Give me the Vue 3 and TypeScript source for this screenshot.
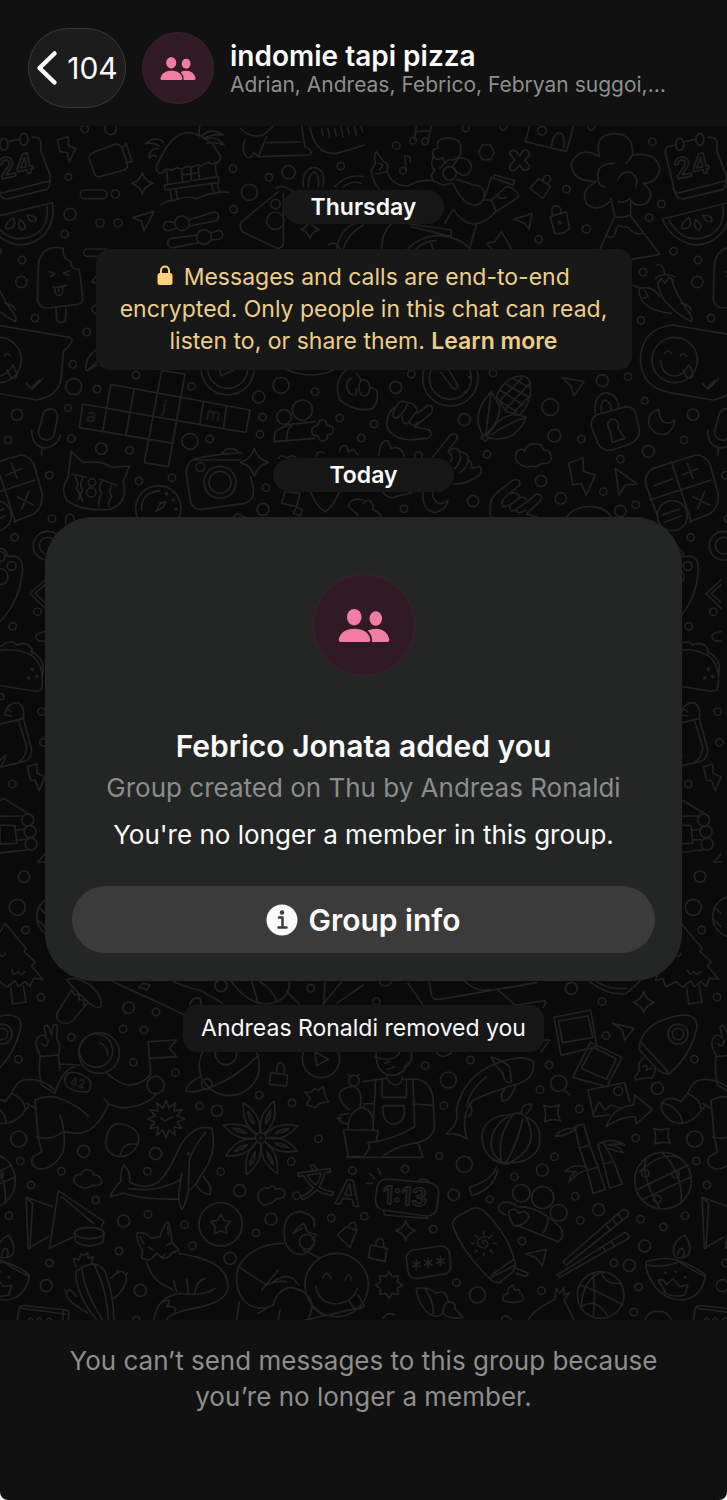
<script setup lang="ts">
type Dot = [x: number, y: number, r: number]
type Label = { text: string; x: number; y: number; size: number; angle: number; weight: number; thin?: boolean; wraps?: boolean }
type Tile = { x: number; y: number; dots: Dot[]; sparkles: Dot[]; paths: string[]; labels: Label[] }

const TILE_WIDTH = 2028
const repeats = [0, -TILE_WIDTH, TILE_WIDTH]

function sparkle([x, y, r]: Dot): string {
  const k = r * 0.22
  return `M${x} ${y - r}Q${x + k} ${y - k} ${x + r} ${y}Q${x + k} ${y + k} ${x} ${y + r}Q${x - k} ${y + k} ${x - r} ${y}Q${x - k} ${y - k} ${x} ${y - r}Z`
}

function star(x: number, y: number, points: number, outer: number, inner: number): string {
  const steps = Array.from({ length: points * 2 }, (_, i) => {
    const r = i % 2 === 0 ? outer : inner
    const a = (Math.PI * i) / points - Math.PI / 2
    return `${Math.round(x + r * Math.cos(a))} ${Math.round(y + r * Math.sin(a))}`
  })
  return `M${steps.join('L')}Z`
}

function asterisk(x: number, y: number): string {
  return `M${x} ${y - 13}v26M${x - 11} ${y - 7}l22 14M${x + 11} ${y - 7}l-22 14`
}

// Labels cut by the edge are repeated with the tile, the others are drawn once.
function labelsFor(tile: Tile, shift: number): Label[] {
  return tile.labels.filter((label) => shift === 0 || (label.wraps && shift < 0))
}

const petals = [20, 72, 109, 155, 201, 243, 289, 334]

const tiles: Tile[] = [
  {
    x: 0,
    y: 360,
    dots: [
      [254, 27, 11], [332, 27, 17], [205, 171, 10], [346, 222, 12], [210, 283, 18], [300, 309, 12], [354, 309, 12],
      [194, 342, 11], [66, 420, 11], [64, 486, 17], [105, 594, 11], [260, 636, 11], [218, 733, 11], [699, 146, 11],
      [748, 217, 24], [866, 157, 20], [807, 172, 11], [1022, 138, 11], [701, 268, 11], [408, 766, 11],
      [827, 252, 14], [826, 302, 26], [546, 310, 22], [612, 351, 22],
    ],
    sparkles: [[427, 190, 32], [930, 328, 28]],
    paths: [
      'M172 60L205 50L205 78L227 85L207 128L203 98L180 95Z',
      'M285 95L345 73Q360 70 366 84L382 130Q385 145 372 150L300 170Q287 172 282 158L267 115Q266 102 285 95ZM365 88L378 70L396 125L378 128',
      'M254 210H308a13 13 0 0 1 0 26H254a13 13 0 0 1 0 -26ZM320 387H262a11 11 0 0 0 0 22H320',
      'M398 293L462 274L432 332L425 304Z',
      'M555 38Q530 42 500 80L470 135Q465 160 485 160Q500 140 515 152Q530 138 545 148Q560 135 575 143Q590 130 605 138Q620 122 635 132Q662 130 662 110L640 75Q600 35 555 38Z',
      'M490 65Q465 45 435 72Q460 65 478 78M475 85Q445 85 448 115Q460 100 470 110M600 50Q595 30 600 18M605 50Q630 20 670 45Q640 40 612 55M615 58Q650 45 672 75Q645 65 622 70',
      'M493 195L655 170L658 187L495 210ZM510 212L515 240M528 210L532 235M635 192L642 218M652 190L658 215M500 155L503 190M645 125L650 168M545 150L548 182M595 142L598 175M572 145L574 180M545 165L597 158M483 254Q500 240 520 242Q560 225 590 236Q640 212 688 217',
      'M525 308L505 304Q490 306 490 320Q493 334 508 332L528 325M566 300L642 276Q656 276 656 290Q655 300 645 303L568 318',
      'M592 345L515 355Q502 360 503 372Q508 385 522 383L598 368M632 340L655 331Q668 332 668 345Q667 356 655 358L634 360',
      'M722 25Q745 55 790 45L820 18M775 110L800 50M735 60Q722 95 742 112Q755 115 762 98L775 110L930 105Q940 90 915 80L905 18M800 68L900 66',
      'M930 22Q945 105 1010 100Q1050 90 1092 75M965 28l4 18M983 24l6 28M1003 24l6 24M1023 22l6 28M1043 22l5 22M1063 20l6 25M1083 20l4 16',
      'M830 205Q840 190 880 215M835 215L725 305Q715 320 728 335L830 385Q850 385 850 370L850 220',
      'M910 200Q905 150 940 142Q980 145 968 200M925 200Q925 165 942 155Q960 165 955 200M1005 200Q1040 160 1090 170M1030 200Q1055 180 1085 190',
      'M1010 385Q1020 330 1065 310M1030 385Q1045 340 1090 315M985 375Q1005 360 1020 385',
      'M150 385Q118 395 115 440L112 535Q115 562 140 564L235 553Q250 548 248 530L238 448Q215 452 212 425Q185 415 190 385Q170 380 150 385ZM168 564L170 600Q180 615 196 602L198 560',
      'M147 455L165 462L150 470M208 452L190 460L207 467M157 500Q180 505 200 495M165 502Q163 527 178 527Q190 525 188 500M176 503v12',
      'M287 470L275 485L287 490M287 555Q265 567 287 582M258 750Q255 710 290 688M262 752L290 735',
    ],
    labels: [],
  },
  {
    x: 1089,
    y: 360,
    dots: [
      [100, 77, 11], [308, 25, 10], [421, 20, 10], [610, 207, 11], [670, 327, 12], [527, 358, 11], [858, 293, 11],
      [895, 252, 11], [868, 65, 11], [932, 394, 11], [840, 456, 11], [834, 601, 11], [685, 20, 10], [260, 160, 20],
      [150, 62, 10], [186, 64, 10], [120, 152, 10], [537, 32, 13], [590, 308, 4], [935, 720, 68],
    ],
    sparkles: [],
    paths: [
      'M935 75L915 80Q903 88 908 102L935 215Q942 240 965 236L1080 208Q1092 200 1089 165L1062 95L1062 68Q1058 48 1035 52M965 65L995 58M930 205Q935 220 950 218L1085 183',
      'M950 55a12 18 0 1 0 1 0ZM1010 40a12 18 0 1 0 1 0Z',
      'M898 297L1096 248Q1105 300 1075 340Q1040 378 990 374Q925 360 898 297ZM918 300Q945 350 990 356Q1040 358 1066 325Q1085 300 1080 258',
      'M978 293Q955 305 957 325Q978 330 984 310ZM998 298Q988 325 1008 330Q1025 320 998 298ZM1020 285Q1025 308 1045 304Q1055 288 1020 285Z',
      'M155 60L160 15M195 62L205 18M160 35L203 32M130 150L125 108Q145 105 142 125',
      'M40 95Q30 105 38 130L25 150Q28 185 50 210M40 95Q55 115 62 125Q80 130 72 155L38 162M45 130l15 5 -10 15M72 155Q90 200 135 198Q170 178 210 182L240 195L265 190M210 110Q200 140 215 150L205 165L210 182M212 110Q225 125 240 112L245 130L230 145M212 110Q202 85 225 85Q215 50 265 55Q300 60 292 90Q300 110 270 120Q255 115 245 130',
      'M285 115Q320 110 326 140Q320 170 295 165L275 150M285 115L268 140M270 190Q290 235 315 250Q350 265 362 235Q370 200 335 195L280 178M362 240L385 240L430 200Q455 200 468 230L400 275L385 240M400 225Q410 240 430 232M245 310L270 268Q300 310 330 312Q370 310 400 272M340 315L320 385M395 165L455 182L450 195L390 175ZM385 172L365 230',
      'M55 385Q60 330 85 312M140 312L265 330L265 350L145 320M135 385Q180 345 230 347Q290 352 320 385M160 385Q190 360 220 362M200 365l10 20',
      'M358 75L382 75L394 97L382 119L358 119L346 97Z',
      'M440 100Q445 85 460 95L470 108L480 92Q498 85 500 105L485 120L500 138Q500 152 480 150L470 135L455 152Q438 155 440 138L455 120Z',
      'M500 18L487 65L610 95L625 45L630 18M565 80Q570 40 590 38Q610 45 600 92',
      'M500 205L528 175L562 200L540 235ZM540 180Q545 160 560 168Q568 180 552 192',
      'M452 298L507 280L498 328L485 310Z',
      'M562 290L610 275L620 325Q600 345 575 340ZM568 285Q562 260 578 257Q598 260 592 278M370 370L395 365L415 335L445 385M370 370L385 385',
      'M710 110Q690 45 755 40Q815 45 808 105Q880 95 890 145Q885 190 840 190Q880 220 850 250Q820 265 803 240M710 110Q650 75 625 130Q625 185 700 185Q650 210 670 250Q700 280 740 245M705 170Q700 130 755 130M808 105Q800 120 790 130M765 180Q775 150 805 158Q830 175 818 200M705 170Q705 200 725 200',
      'M743 235Q750 260 755 290M803 245L803 285M755 290Q780 295 803 285M765 245Q785 250 803 235',
      'M755 290L712 385M803 288L890 403L805 418M735 350Q755 360 760 325Q765 310 780 322Q790 315 800 328Q820 345 838 340',
      'M880 435Q900 430 905 460M878 475Q895 455 935 470M885 485Q885 550 985 605Q990 595 980 580Q940 530 925 475M885 490L895 475L905 490L918 472L932 482M810 495L830 505Q870 495 890 530M828 510Q830 570 925 580M845 510L855 530L840 535M955 550Q980 555 985 570',
      'M929 615L1149 652Q1159 660 1152 670L1129 695L1122 780Q1110 830 1049 840L920 818Q835 800 832 720Q835 625 929 615Z',
      'M893 720Q895 768 940 768Q965 762 977 735M905 700q10 -15 20 0M952 708q8 -15 18 0M960 750L972 772Q988 780 990 762L980 738M1018 790l14 15l25 -25M1035 808l32 -32',
    ],
    labels: [{ text: '24', x: 940, y: 178, size: 84, angle: -12, weight: 600, wraps: true }],
  },
  {
    x: 0,
    y: 1080,
    dots: [
      [221, 80, 24], [291, 87, 11], [51, 164, 17], [204, 144, 10], [24, 240, 11], [214, 236, 11], [304, 266, 17],
      [389, 271, 11], [148, 346, 11], [408, 45, 11], [575, 79, 11], [629, 237, 11], [570, 244, 24], [776, 111, 18],
      [843, 76, 24], [945, 95, 11], [788, 171, 11], [780, 223, 11], [1019, 174, 11], [852, 171, 22], [907, 150, 30],
      [1084, 234, 11], [417, 363, 11], [516, 353, 11], [798, 383, 11], [789, 448, 18], [156, 476, 11], [44, 532, 11],
      [143, 557, 43], [143, 557, 25], [475, 445, 68], [660, 367, 48], [660, 367, 33], [601, 321, 13], [683, 25, 80],
      [683, 25, 60], [35, 618, 13], [0, 650, 24], [0, 590, 15], [276, 367, 11], [274, 397, 14], [500, 401, 3],
      [520, 420, 3], [528, 447, 3],
    ],
    sparkles: [[763, 307, 42]],
    paths: [
      'M130 160Q140 142 158 148Q175 155 172 175L163 220Q155 242 138 240Q115 235 115 215ZM95 210Q95 260 135 264Q172 260 182 225M127 264L125 285',
      'M332 73L750 150L738 218L248 132L238 203L520 250M332 73L308 215M402 88L378 225M485 32L433 308L505 320L555 42ZM610 125L600 192M680 137L670 205',
      'M213 275L250 308Q300 300 335 322L388 318L370 365Q385 430 330 448Q240 455 200 420Q180 390 205 350Z',
      'M215 342L260 352M300 358L350 375M225 350Q240 370 228 385Q245 400 235 420M248 355q-12 20 0 35q-12 15 0 35M305 365q-12 20 0 35q-12 20 -8 40M335 375q-12 20 0 35q-12 15 -8 30',
      'M425 450Q420 400 480 392M468 455L480 430L497 425L490 440Z',
      'M722 300L575 300M575 300Q555 320 560 350L572 425Q580 450 605 448L735 430Q765 420 760 385L752 350M575 300Q620 285 725 278M665 280Q690 255 715 275',
      'M660 30L663 48L700 30M860 30Q940 60 1000 30M265 28L290 5',
      'M822 245L825 215Q860 190 900 190L945 185M822 245L945 235M860 240Q860 205 875 198',
      'M955 195Q955 178 968 180Q982 180 980 197Q1000 195 1000 210Q1000 225 982 225Q985 243 968 243Q955 243 955 228Q935 228 935 212Q937 198 955 195Z',
      'M835 295q10 -15 25 0q15 -15 30 0M948 290Q950 270 972 278M1018 275Q1020 255 1040 258L1045 275L1060 268L1075 285M855 395L900 400L890 440L845 430ZM890 440L908 450L900 468L880 460ZM932 397Q950 440 975 455Q1000 440 1017 397M1092 420Q1050 410 1045 440L1075 465',
      'M0 565Q20 565 22 590Q70 580 67 630Q62 720 0 785M135 660L90 700L135 745M135 675L105 700L135 727M197 490Q195 462 210 462Q225 465 222 490M700 471l12 -10l22 10',
    ],
    labels: [
      { text: 'a', x: 258, y: 182, size: 52, angle: 9, weight: 300, thin: true },
      { text: 'j', x: 485, y: 155, size: 50, angle: 9, weight: 300, thin: true },
      { text: 'm', x: 616, y: 178, size: 50, angle: 9, weight: 300, thin: true },
    ],
  },
  {
    x: 1089,
    y: 1080,
    dots: [
      [98, 82, 18], [145, 42, 11], [33, 192, 11], [304, 179, 18], [372, 283, 11], [390, 39, 11], [562, 141, 25],
      [574, 227, 19], [655, 237, 11], [718, 62, 18], [795, 50, 11], [845, 122, 10], [856, 274, 18], [772, 297, 11],
      [721, 395, 11], [534, 363, 17], [593, 415, 17], [330, 423, 17], [123, 446, 11], [772, 453, 17], [818, 434, 11],
      [166, 287, 11], [262, 55, 83], [262, 55, 63], [928, 467, 45], [320, 52, 3], [307, 97, 3],
    ],
    sparkles: [],
    paths: [
      'M-50 30Q-90 60 -70 120Q-20 160 30 145Q50 120 40 90L20 80Q15 55 -5 60L-20 40M-35 55Q-60 70 -40 100Q-15 115 -20 85M-5 60Q-20 80 -5 105Q15 115 20 85',
      'M232 35L270 85Q280 90 285 78L258 30',
      'M85 150Q60 190 80 215Q110 245 155 238L195 235Q210 225 200 210L155 200L205 160Q215 140 195 135L165 160Q160 130 135 128Q110 115 100 140ZM100 140Q80 170 100 175Q120 165 135 128M118 170Q115 195 135 190L160 155M140 188Q150 205 165 185',
      'M210 290L262 225Q285 215 283 235L255 275Q280 255 290 275Q320 280 315 300Q330 305 325 325L350 320Q360 330 350 345Q310 375 270 372M255 275Q275 290 262 305M290 280Q300 300 275 325M315 300Q315 320 292 337',
      'M400 110Q420 60 460 50Q500 40 503 80Q505 130 470 165L430 155ZM410 90L480 135M425 70L495 110M450 55L503 85M405 120L460 155M430 145L500 70M412 120L480 50M450 160L503 105',
      'M385 95Q340 140 345 190L360 230Q410 190 410 140ZM385 95Q375 170 370 215M490 172Q440 150 400 190L370 230Q410 245 450 225Q480 200 490 172ZM490 172Q430 190 385 225M352 232l12 -10l14 10l-10 12Z',
      'M597 53L663 65L633 107L625 80Z',
      'M700 165L790 140Q812 140 818 160L830 215Q828 240 800 252L740 272Q715 270 705 250L685 200Q682 175 700 165ZM697 160Q690 105 730 98Q765 105 767 142M715 155Q712 120 728 120Q745 130 745 150M740 210Q725 185 748 177Q770 180 765 205L785 235L748 247Z',
      'M888 148Q850 160 858 195Q875 230 910 222Q935 205 935 180Q920 195 900 185Q885 165 888 148ZM180 395Q175 450 215 458Q250 450 255 422Q230 440 215 420Q205 405 210 395',
      'M475 315Q445 295 465 272Q480 262 485 275Q490 248 520 252Q540 255 540 268Q565 270 565 295Q560 315 535 310Q520 325 505 318Q490 325 475 315Z',
      'M617 310L660 293L662 335L697 345L670 405L655 370L630 375ZM757 325L823 372L787 375L768 405Z',
      'M383 470Q375 420 400 400L450 360Q475 355 470 375L440 400Q465 395 470 412Q490 410 492 425L520 402Q545 405 530 425L490 462L520 470M440 400Q410 420 420 440Q440 440 470 412M440 435Q440 460 458 450L492 425M460 452Q465 465 490 450',
      'M610 471Q640 435 690 440Q730 445 745 471M48 285Q50 240 75 242L85 265Q115 255 125 290M60 395Q70 415 90 412L145 398M0 430Q20 410 30 435L30 450Q50 455 55 471',
      'M870 325L1000 285Q1025 285 1040 310L1065 400Q1070 440 1040 462L980 485M870 325Q840 345 850 380L885 470M925 305L985 485M860 420L1045 360M873 377L928 357M958 345L1005 325M973 310L990 355M990 410L1040 435M1025 395L1005 445M898 465L950 447M905 487L955 468',
    ],
    labels: [],
  },
  {
    x: 0,
    y: 1740,
    dots: [
      [112, 95, 11], [38, 139, 11], [3, 350, 9], [125, 395, 11], [130, 487, 11], [37, 612, 11], [72, 890, 17],
      [52, 982, 24], [77, 1050, 11], [83, 720, 18], [90, 755, 18], [93, 792, 18], [97, 268, 3], [86, 294, 3],
      [110, 289, 3], [172, 1010, 62],
    ],
    sparkles: [],
    paths: [
      'M-40 250Q-20 205 25 210Q60 205 100 230Q135 260 125 325Q120 335 100 333L-40 310M-20 200Q10 200 15 190Q40 180 50 195Q80 185 90 200Q100 210 95 222M95 215Q138 235 128 285',
      'M135 155L115 160Q100 170 115 182L135 184',
      'M15 400Q25 365 55 368Q75 380 70 415L95 510Q95 540 70 545L-30 568M-30 440L70 415M55 420L80 500Q80 530 55 548M20 385L35 395M15 405L35 408M0 540L18 525L12 545L0 562',
      'M82 560L110 552L112 580L135 590L118 632L105 600L92 602Z',
      'M-60 710L10 655L100 710M-60 710L68 708M-60 825L80 810M0 735L45 737L50 790L0 792ZM48 750L72 748M52 780L75 778M135 822L113 846H135M120 985L135 1000M112 1020L135 1040',
    ],
    labels: [],
  },
  {
    x: 0,
    y: 2880,
    dots: [
      [123, 112, 11], [386, 143, 17], [468, 156, 11], [369, 207, 11], [432, 210, 11], [214, 232, 11], [55, 298, 11],
      [400, 307, 11], [526, 338, 11], [599, 438, 11], [651, 452, 17], [56, 537, 24], [251, 574, 18], [61, 603, 11],
      [184, 634, 11], [442, 634, 11], [467, 581, 18], [93, 675, 11], [287, 720, 11], [27, 767, 11], [371, 783, 18],
      [444, 763, 11], [554, 794, 11], [577, 857, 11], [357, 873, 11], [148, 909, 11], [139, 977, 18], [421, 991, 18],
      [663, 77, 18], [932, 85, 11], [778, 405, 11], [876, 429, 11], [955, 536, 11], [874, 605, 11], [1057, 632, 11],
      [662, 635, 11], [719, 692, 18], [889, 707, 11], [813, 777, 18], [768, 819, 11], [994, 774, 11], [690, 895, 18],
      [409, 1080, 11], [662, 793, 65], [297, 279, 61], [288, 272, 50], [467, 375, 26], [688, 317, 90], [620, 372, 16],
      [678, 282, 32], [963, 297, 56], [1062, 362, 16], [920, 845, 22], [1010, 975, 95], [782, 534, 16], [782, 534, 3],
      [565, 581, 3],
    ],
    sparkles: [],
    paths: [
      'M15 -110L78 -35L72 -25L105 5L95 18L128 58L100 55L90 80L75 65L55 80L45 62L20 82L0 65L-30 80L-40 55L-62 62L-40 0L-55 -5L-20 -50ZM0 -15q10 10 15 -5M35 30q5 20 20 5q5 15 20 0M32 82L38 132L78 126L70 78',
      'M200 60Q220 45 270 75Q310 110 303 140Q290 150 262 125Q225 90 200 60ZM215 90L180 145Q160 170 180 185Q200 198 220 180L262 130M215 90l10 15l12 -5v20h15v15',
      'M120 285Q100 250 112 235Q125 215 140 235L132 200Q140 190 148 205L155 225L160 195Q175 190 172 210L170 235Q185 260 175 285L120 290Q115 340 125 375L165 400M175 285L180 330M180 312L240 315M125 250q15 20 20 -10M165 400Q185 330 225 320',
      'M320 340Q370 380 395 375Q430 370 450 345M470 402Q430 445 360 443L325 432L312 415M325 432Q290 520 230 520L190 515M105 420Q150 400 190 420Q240 440 265 470M105 420L115 535M110 530Q150 545 190 515M180 465Q200 520 190 575Q160 630 115 627Q85 610 100 590L125 575L115 535',
      'M165 390Q120 350 70 360Q50 365 35 400M35 400L15 425Q-20 405 -40 425Q-55 450 -20 480Q20 505 60 470L85 440M35 400Q75 420 75 445M80 430L105 445M-44 430Q-20 430 0 450Q20 470 18 490',
      'M205 340Q225 330 265 355Q280 370 265 395Q230 400 200 380Q185 355 205 340ZM300 248Q325 260 322 285M452 345L445 245L530 240L508 265L530 290L452 295',
      star(498, 477, 12, 56, 34),
      'M482 475L495 482L518 470',
      'M345 492Q370 485 405 510Q420 525 415 550Q395 590 360 590Q320 585 317 550Q320 505 345 492ZM360 590Q365 545 412 553',
      'M330 710Q345 680 362 665Q360 635 372 615Q395 640 388 665Q430 690 470 670Q500 650 540 560Q580 490 635 505Q655 580 600 650Q580 690 565 690Q555 740 545 748Q530 720 540 680L545 640M385 685Q470 700 540 660M330 710L370 700Q430 720 535 717M618 515Q580 560 568 600L565 690M610 650Q640 680 630 703Q600 700 590 675',
      'M240 680Q215 670 225 650Q235 640 242 645Q250 625 268 630Q282 635 280 645Q305 645 305 665Q300 680 280 675Q260 690 240 680ZM790 735Q770 720 775 700Q785 680 805 685Q820 670 828 688Q850 680 855 700Q850 720 830 715Q815 735 790 735Z',
      'M158 740L78 712L85 865L145 830M78 712L98 730L90 865M175 692L148 865L222 830M175 692L312 785L305 800M185 710L280 790',
      'M223 818Q230 803 268 803Q306 803 313 818Q306 835 268 836Q230 835 223 818ZM223 820L227 845Q268 870 310 845L313 820',
      'M228 935Q285 890 315 935Q340 1000 342 1080M228 935Q225 1000 290 1080M245 918Q250 990 308 1080M280 910Q320 980 325 1080M228 920L220 895L238 900L242 882L255 885L262 878L265 895L280 890L275 910M333 955Q365 920 378 945Q385 980 342 1015M355 940l-3 -10M378 945l5 -8M228 1010Q205 975 200 1000Q195 1020 262 1058M200 1000l-5 -10',
      'M52 1080L58 1045Q62 1035 75 1037L200 1050Q210 1055 205 1080M65 1045L195 1062M190 1052L188 1080M85 1080q5 -12 15 0M110 1080q8 -12 15 0M140 1080q8 -12 15 0',
      star(662, 795, 5, 32, 17),
      'M600 350Q560 370 558 393Q590 400 640 378Q720 345 775 285M945 275L985 298L950 317Z',
      'M812 338L862 345L860 378L808 373ZM830 335Q830 305 845 308Q857 315 852 342M915 395Q930 400 935 395L945 385L955 392L970 378L975 405L985 425L960 430L945 443L920 435L930 415Z',
      'M1092 510H1030L1045 590H1092M1045 510Q1040 455 1092 440M1080 440Q1090 390 1060 378Q1015 385 1018 410Q1030 440 1050 450M1015 470Q1015 490 1045 492M1020 465L1045 460M1025 475l-15 0M1050 350l-4 -8M1072 348l5 -6',
      'M410 820Q430 812 455 835L480 830Q490 795 503 785Q515 810 515 845L537 870L515 880Q500 900 485 893L470 880L450 900L425 895L427 870Q410 850 410 820ZM445 862l15 8M500 855l15 -5M475 885q10 12 20 -3M420 830l12 22M503 800l2 25',
      'M440 905Q450 950 490 975L520 990M537 880Q600 890 640 910Q690 940 683 990Q670 1030 580 1045Q510 1060 500 1078M462 1080Q470 1010 540 1000Q610 1010 645 985M490 1025Q520 1010 500 1040Q540 1035 520 1065M583 1005Q590 960 615 955M520 960L530 995M560 958L565 1000',
      'M855 845Q840 760 900 755Q950 765 943 800M905 805L880 820L895 800L912 790L922 815L950 825L935 840M855 845Q870 885 910 883Q940 870 945 840',
      'M850 850Q760 850 715 920L800 975Q830 960 860 965M715 920Q700 980 730 1020Q770 1060 820 1035Q830 990 870 982Q930 990 937 1040L925 1080M820 965Q870 930 895 975M785 990L835 930M710 1080L718 1025M775 1060L800 1045M835 1080L840 1050M910 870L960 895M935 1040L965 1063M910 1082L1092 1040',
      'M948 980Q955 1030 1010 1032Q1060 1025 1072 985M968 955q12 -30 25 0M1035 960q12 -30 20 0M1045 1020L1065 1048Q1085 1050 1092 1035L1075 1005M1012 825L1040 800L1070 812L1050 862ZM1045 800Q1050 785 1065 788L1070 812',
      'M340 65L555 165M520 65Q570 85 600 90L668 130M430 70l20 5l-10 15l-25 -10ZM695 65Q740 130 800 132Q870 125 868 65M755 65L775 130M780 65Q820 90 830 125M860 95L898 132M970 132Q975 90 975 65M970 132L1025 65M1010 130L1090 75M570 135Q575 110 600 115L605 135',
    ],
    labels: [
      { text: '42', x: 208, y: 376, size: 36, angle: 12, weight: 400, thin: true },
      { text: '文', x: 898, y: 712, size: 108, angle: -8, weight: 500 },
      { text: 'A', x: 1003, y: 730, size: 104, angle: 8, weight: 600 },
    ],
  },
  {
    x: 1089,
    y: 2880,
    dots: [
      [40, 125, 11], [67, 60, 18], [186, 317, 11], [322, 300, 11], [256, 360, 24], [242, 437, 11], [229, 588, 10],
      [126, 627, 11], [304, 613, 24], [272, 705, 17], [380, 718, 10], [211, 807, 11], [280, 968, 11], [343, 1005, 24],
      [454, 650, 11], [538, 630, 18], [574, 590, 11], [637, 709, 11], [707, 749, 18], [652, 781, 11], [477, 843, 11],
      [475, 700, 26], [539, 713, 33], [587, 758, 25], [535, 992, 11], [717, 125, 11], [625, 85, 18], [729, 227, 11],
      [558, 315, 11], [531, 389, 11], [649, 447, 11], [883, 385, 18], [818, 534, 11], [832, 778, 11], [901, 801, 11],
      [845, 858, 18], [753, 909, 11], [799, 916, 18], [827, 981, 11], [812, 1056, 11], [4, 769, 11], [587, 370, 24],
      [766, 393, 13], [945, 222, 30], [945, 222, 17], [900, 662, 85], [847, 640, 11], [938, 643, 11], [883, 717, 11],
      [713, 1005, 70], [907, 938, 2], [938, 935, 2], [966, 952, 2],
    ],
    sparkles: [[842, 127, 32], [128, 812, 30]],
    paths: [
      'M40 275Q35 330 75 345Q120 350 135 310M35 290Q90 310 110 278M145 278Q150 310 125 320M70 345Q75 375 100 375Q120 370 117 350M65 310l15 -5M75 328l20 -8',
      'M0 365L70 355M117 357L165 358Q200 365 210 410L215 500Q210 535 165 548Q90 560 60 590M165 548L180 592H-50M38 358L30 510M150 362L155 500Q90 540 15 548L20 565L5 585M58 360L56 412H130V360M60 437H123Q130 490 90 493Q55 485 60 437M150 432L210 436M0 432L33 430M0 510L45 512L40 545M0 445Q30 450 30 485',
      'M250 522Q290 490 280 450Q300 350 400 310Q480 280 510 305Q520 350 470 370Q400 390 330 420Q290 470 312 537Q290 520 250 522ZM385 292Q420 300 440 320L445 365Q425 375 420 340Q390 310 385 292ZM458 378Q440 425 418 423Q410 400 425 390M310 440Q320 390 370 350M320 430Q335 460 315 470',
      'M450 463Q370 465 357 520Q355 590 410 605Q500 620 528 560Q540 490 490 472M440 467Q380 500 385 560Q390 590 412 600M450 465Q400 530 415 600M480 475Q460 560 430 605M490 475Q535 560 440 608M447 465Q465 450 495 475M475 460Q475 430 505 432Q505 450 490 460M390 600Q420 615 437 612M400 620Q390 660 320 682L325 707Q390 690 405 630',
      'M573 172L683 150L702 260L594 286ZM587 183L675 168L690 232L598 248Z',
      'M682 247L777 292L732 380L629 352ZM690 262L760 296L730 358L655 325Z',
      'M800 425L785 368L675 390L692 470L740 465M692 460L708 425L725 450L745 435L770 445M730 500Q750 440 812 435L815 405L868 448L820 492L817 470Q770 470 730 500Z',
      'M748 190L813 205L785 240L778 210ZM603 388L620 405M530 240H560L535 275',
      'M830 250Q850 180 960 165Q1010 165 1000 210Q980 290 920 340Q895 345 870 315L830 270ZM832 245L915 335M845 290Q820 310 830 330L815 350L820 360Q850 350 865 355Q880 340 875 320M840 320Q855 310 850 330L865 325',
      'M542 437Q567 445 588 434Q580 460 592 482Q567 475 545 485Q552 460 542 437ZM872 505Q897 513 918 505Q910 528 922 550Q897 543 875 552Q882 528 872 505Z',
      'M635 500L662 492L680 555L650 565ZM650 565L672 630L705 622L680 555M672 630L690 700L727 688L705 622M575 530Q600 500 640 505Q620 525 575 530M705 555L720 545L752 605L722 612ZM722 612L740 685L778 672L752 605M720 545Q760 535 785 555Q760 550 735 555Q770 555 780 578Q760 575 735 565M605 635Q630 610 665 620M665 632Q640 640 618 667Q620 645 640 635L605 635',
      'M820 690L975 615M835 720L985 650M850 595Q830 640 890 745M900 580Q960 640 955 730M830 635Q900 570 950 595',
      'M70 657L200 668Q228 675 227 700L222 745Q215 768 190 768L60 750Q35 745 38 715L42 680Q50 658 70 657ZM60 750L65 765L195 775L192 768M165 663Q185 650 200 668M20 640l15 15M45 625l8 18M12 670h16',
      'M270 800Q265 780 290 765L330 745Q350 740 370 760Q440 830 458 915L380 955Q300 880 270 800ZM380 955Q390 968 410 968L450 935L458 915M385 945L450 900M460 925L495 940L490 950L458 940',
      'M360 850q-5 -10 8 -8q15 10 -2 22q-25 0 -22 -22q15 -20 35 -8M362 815v8M362 880v8M325 850h8M392 850h8M336 825l6 6M388 825l-6 6M336 877l6 -6M388 877l-6 -6',
      'M430 765Q400 755 408 735Q430 715 465 740Q530 740 590 800Q610 830 585 845L460 795M440 770Q430 745 455 748Q465 755 468 760Q490 745 498 770Q490 795 455 798Q445 790 440 770ZM555 775Q555 800 540 820',
      'M600 905L780 748Q800 750 795 768L610 915ZM583 945L785 818Q800 820 797 835L590 952ZM730 795L742 812M750 778L762 795M765 762L778 780M720 860L728 875M745 845L755 860',
      'M850 905Q900 890 935 899Q1000 920 1027 945Q1020 1010 960 1020Q900 1020 870 970Q845 935 850 905ZM850 915Q900 925 948 905Q985 930 1027 950M935 890Q920 850 965 825Q990 860 975 885Q955 900 935 890M945 885Q945 865 958 865Q968 875 960 890M885 960L910 1000M885 960Q905 955 910 975L930 955L950 980L975 975L965 1005Q930 1015 900 995',
      'M650 975Q700 990 780 1035M715 935Q725 975 772 970M715 937Q660 960 655 1035M655 1040Q700 1010 735 1070M690 940Q700 1010 690 1072',
      'M150 870L235 858Q255 860 260 880L263 920Q262 938 245 942L160 956Q138 955 135 935L130 895Q130 875 150 870Z',
      asterisk(160, 913),
      asterisk(196, 908),
      asterisk(232, 903),
      'M22 855L72 865L66 905L17 893ZM38 855Q40 835 52 835Q65 840 62 862',
      star(78, 975, 8, 40, 27),
      'M160 985Q200 980 220 1000Q250 985 255 1025Q280 1025 275 1045L300 1072Q260 1080 240 1060Q220 1080 190 1055Q160 1020 160 985ZM185 985Q215 1030 210 1060M240 1060q0 -25 15 -35',
      'M450 975Q430 985 435 1000Q415 1005 422 1022Q450 1032 478 1022Q485 1005 470 1000Q475 985 455 990ZM487 882L550 868L538 918L520 893Z',
      'M497 1080Q505 1055 575 1018L580 985L590 1000L603 983V1005L620 998L603 1020L635 1083M415 1080Q420 1055 447 1080M845 1080Q860 1050 885 1055Q910 1050 925 1080M60 1075q10 -20 35 -10',
      'M135 70L180 135M198 65L205 105Q210 120 230 118L520 68M405 90L460 138M305 65Q350 100 380 88M460 135L545 122Q552 130 540 142M680 65Q740 110 790 100L830 65M700 65Q740 90 790 85M220 278Q240 300 265 278',
    ],
    labels: [{ text: '1:13', x: 57, y: 730, size: 74, angle: 4, weight: 600 }],
  },
]

const groupName = 'indomie tapi pizza'
const members = 'Adrian, Andreas, Febrico, Febryan suggoi,…'
</script>

<template>
  <main class="screen">
    <svg class="symbols" aria-hidden="true">
      <symbol id="people" viewBox="112 141 157 104">
        <ellipse cx="161" cy="168" rx="22" ry="25" />
        <ellipse cx="226" cy="172" rx="19" ry="22" />
        <path d="M114 237C118 214 137 203 162 203S206 214 210 237Q210 243 204 243H120Q114 243 114 237Z" />
        <path d="M202 208Q214 203 227 203C248 203 264 216 267 237Q267 243 261 243H215Q217 224 202 208Z" />
      </symbol>
    </svg>

    <header class="header">
      <button class="back" type="button" aria-label="Back, 104 unread">
        <svg class="back-icon" viewBox="0 0 22 36" aria-hidden="true"><path d="M18.5 3.500L3.500 18L18.500 32.500" /></svg>
        <span>104</span>
      </button>
      <span class="avatar avatar-small"><svg class="people"><use href="#people" /></svg></span>
      <div class="heading">
        <h1 class="title">{{ groupName }}</h1>
        <p class="members">{{ members }}</p>
      </div>
    </header>

    <section class="chat">
      <svg class="wallpaper" viewBox="0 378 2181 3582" preserveAspectRatio="xMidYMid slice" aria-hidden="true">
        <g v-for="shift in repeats" :key="shift" :transform="`translate(${shift} 0)`">
          <g v-for="(tile, t) in tiles" :key="t" :transform="`translate(${tile.x} ${tile.y})`">
            <circle v-for="([cx, cy, r], i) in tile.dots" :key="`d${i}`" :cx="cx" :cy="cy" :r="r" />
            <path v-for="(s, i) in tile.sparkles" :key="`s${i}`" :d="sparkle(s)" />
            <path v-for="(d, i) in tile.paths" :key="`p${i}`" :d="d" />
            <text
              v-for="label in labelsFor(tile, shift)"
              :key="label.text"
              :class="{ thin: label.thin }"
              :font-size="label.size"
              :font-weight="label.weight"
              :transform="`translate(${label.x} ${label.y}) rotate(${label.angle})`"
            >{{ label.text }}</text>
          </g>
          <g transform="translate(782 3414)">
            <path
              v-for="angle in petals"
              :key="angle"
              :transform="`rotate(${angle})`"
              d="M-5 -16C-28 -55 -18 -85 0 -118C18 -85 28 -55 5 -16M0 -45Q-8 -68 0 -88Q8 -68 0 -45Z"
            />
          </g>
        </g>
      </svg>

      <p class="day">Thursday</p>
      <p class="notice">
        <svg class="lock" viewBox="0 0 16 20" aria-hidden="true">
          <rect x="0.500" y="8" width="15" height="12" rx="2.500" />
          <path d="M4 9V5.500a4 4 0 0 1 8 0V9" />
        </svg>
        Messages and calls are end-to-end encrypted. Only people in this chat can read, listen to, or share them.
        <a class="learn" href="#">Learn more</a>
      </p>
      <p class="day day-wide">Today</p>

      <article class="card">
        <span class="avatar avatar-large"><svg class="people"><use href="#people" /></svg></span>
        <h2 class="card-title">Febrico Jonata added you</h2>
        <p class="card-meta">Group created on Thu by Andreas Ronaldi</p>
        <p class="card-text">You're no longer a member in this group.</p>
        <button class="info" type="button">
          <svg class="info-icon" viewBox="0 0 32 32" aria-hidden="true">
            <circle class="info-disc" cx="16" cy="16" r="15.500" />
            <circle class="info-dot" cx="16" cy="8.500" r="2.200" />
            <path d="M13 13.500H16.500V23.500M12.500 23.500H20.500" />
          </svg>
          Group info
        </button>
      </article>

      <p class="event">Andreas Ronaldi removed you</p>
    </section>

    <footer class="footer">
      <p>You can’t send messages to this group because you’re no longer a member.</p>
    </footer>
  </main>
</template>

<style>
html {
  background: #ffffff;
}
</style>

<style scoped>
.screen {
  display: flex;
  flex-direction: column;
  min-height: 100vh;
  overflow: hidden;
  border-radius: 0 0 8px 8px;
  background: #111111;
  color: #fafafa;
  font-family: Inter, "Noto Sans CJK SC", sans-serif;
}
h1,
h2,
p {
  margin: 0;
}
button {
  border: 0;
  font: inherit;
  color: inherit;
  cursor: pointer;
}
.symbols {
  position: absolute;
  width: 0;
  height: 0;
}
.header {
  display: flex;
  align-items: center;
  gap: 16px;
  height: 80px;
  padding: 28px 40px 18px 28px;
}
.back {
  display: flex;
  flex: none;
  align-items: center;
  justify-content: center;
  gap: 9px;
  box-sizing: border-box;
  width: 98px;
  height: 80px;
  padding: 0;
  border: 1px solid #393939;
  border-radius: 40px;
  background: #1c1c1c;
  font-size: 30px;
}
.back-icon {
  width: 22px;
  height: 36px;
  fill: none;
  stroke: #fafafa;
  stroke-width: 4.5;
  stroke-linecap: round;
  stroke-linejoin: round;
}
.avatar {
  display: flex;
  flex: none;
  align-items: center;
  justify-content: center;
  box-sizing: border-box;
  border: 1px solid #40202f;
  border-radius: 50%;
  background: #301a25;
}
.avatar-small {
  width: 72px;
  height: 72px;
}
.avatar-small .people {
  width: 36px;
  height: 25px;
}
.avatar-large {
  width: 102px;
  height: 102px;
}
.avatar-large .people {
  width: 52px;
  height: 35px;
}
.people {
  fill: #f17da5;
}
.heading {
  flex: 1;
  min-width: 0;
  padding-top: 2px;
}
.title {
  font-size: 28px;
  font-weight: 600;
  line-height: 32px;
}
.members {
  overflow: hidden;
  color: #8e8e8e;
  font-size: 21px;
  line-height: 26px;
  text-overflow: ellipsis;
  white-space: nowrap;
}
.chat {
  position: relative;
  isolation: isolate;
  display: flex;
  flex: 1;
  flex-direction: column;
  align-items: center;
  overflow: hidden;
  padding: 64px 45px 0;
  background: #0a0a0a;
}
.wallpaper {
  position: absolute;
  z-index: -1;
  inset: 0;
  width: 100%;
  height: 100%;
  fill: none;
  stroke: #222222;
  stroke-width: 5;
  stroke-linecap: round;
  stroke-linejoin: round;
}
.thin {
  stroke-width: 2;
}
.day {
  padding: 0 28px;
  border-radius: 17px;
  background: #171717;
  font-size: 23px;
  font-weight: 600;
  line-height: 34px;
}
.day-wide {
  margin-top: 88px;
  padding: 0 56px;
}
.notice {
  box-sizing: border-box;
  max-width: 536px;
  margin-top: 25px;
  padding: 12px 16px 13px;
  border-radius: 14px;
  background: #181818;
  color: #ecce8b;
  font-size: 23px;
  line-height: 32px;
  text-align: center;
}
.lock {
  width: 16px;
  height: 20px;
  margin-right: 4px;
  fill: #fbd27c;
}
.lock path {
  fill: none;
  stroke: #fbd27c;
  stroke-width: 2;
}
.learn {
  color: inherit;
  font-weight: 600;
  text-decoration: none;
}
.card {
  display: flex;
  flex-direction: column;
  align-items: center;
  align-self: stretch;
  margin-top: 25px;
  padding: 57px 27px 28px;
  border-radius: 48px;
  background: #242626;
  text-align: center;
}
.card-title {
  margin-top: 52px;
  font-size: 30px;
  font-weight: 600;
  line-height: 36px;
}
.card-meta,
.card-text {
  font-size: 26px;
  line-height: 32px;
}
.card-meta {
  margin-top: 8px;
  color: #8b8c8c;
}
.card-text {
  margin-top: 15px;
}
.info {
  display: flex;
  align-items: center;
  align-self: stretch;
  justify-content: center;
  gap: 10px;
  height: 67px;
  margin-top: 35px;
  border-radius: 34px;
  background: #3b3b3b;
  font-size: 30px;
  font-weight: 600;
}
.info-icon {
  width: 32px;
  height: 32px;
  fill: none;
  stroke: #3b3b3b;
  stroke-width: 2.5;
  stroke-linecap: round;
  stroke-linejoin: round;
}
.info-disc {
  fill: #fafafa;
  stroke: none;
}
.info-dot {
  fill: #3b3b3b;
  stroke: none;
}
.event {
  margin-top: 24px;
  padding: 0 18px;
  border-radius: 14px;
  background: #171717;
  font-size: 23px;
  line-height: 47px;
}
.footer {
  padding: 23px 60px 85px;
  color: #8e8e8e;
  font-size: 26px;
  line-height: 36px;
  text-align: center;
}
</style>
